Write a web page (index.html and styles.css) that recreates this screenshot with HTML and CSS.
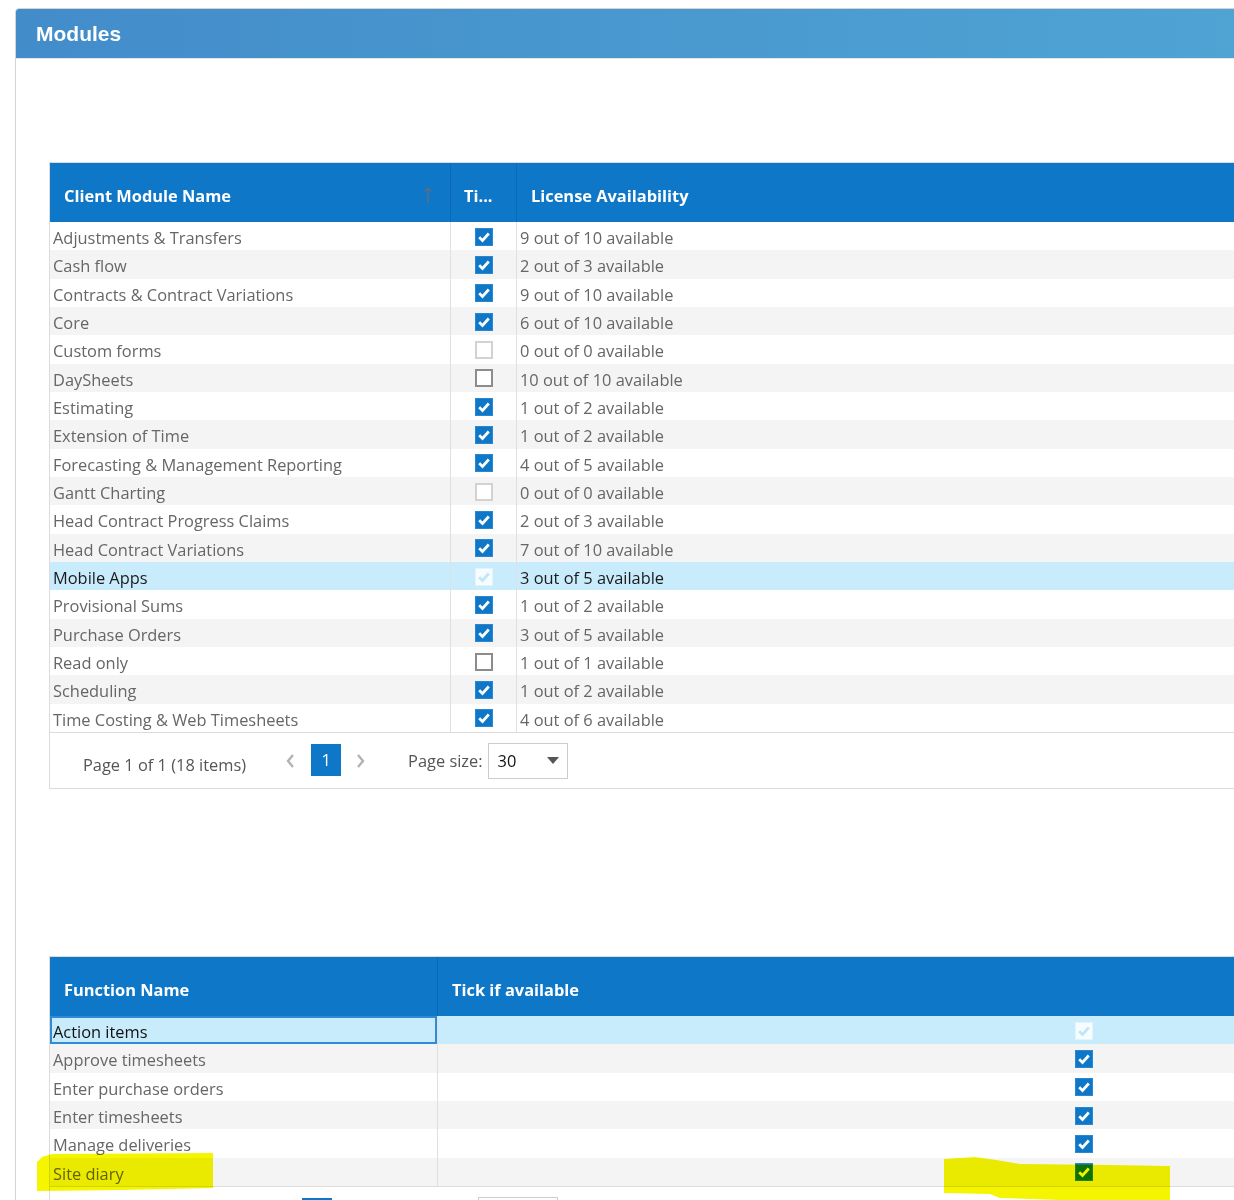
FILE: index.html
```html
<!DOCTYPE html>
<html>
<head>
<meta charset="utf-8">
<title>Modules</title>
<link rel="stylesheet" href="styles.css">
</head>
<body>
<div class="panel">
  <div class="panel-head">Modules</div>
  <div class="panel-body">

    <div class="grid">
      <div class="ghead">
        <div class="hc m-name"><span>Client Module Name</span>
          <svg class="sort" width="10" height="18" viewBox="0 0 10 18"><path d="M5 17V2M1.5 5.5L5 2l3.5 3.5" fill="none" stroke="#5b6f82" stroke-width="1.4"/></svg>
        </div>
        <div class="hc m-tick">Ti...</div>
        <div class="hc m-lic">License Availability</div>
      </div>

      <div class="grow"><div class="gc m-name">Adjustments &amp; Transfers</div><div class="gc m-tick"><span class="cb on"><svg viewBox="0 0 18 18"><path d="M4.2 9.2l3.3 3.3 6.3-7" /></svg></span></div><div class="gc m-lic">9 out of 10 available</div></div>
      <div class="grow alt"><div class="gc m-name">Cash flow</div><div class="gc m-tick"><span class="cb on"><svg viewBox="0 0 18 18"><path d="M4.2 9.2l3.3 3.3 6.3-7" /></svg></span></div><div class="gc m-lic">2 out of 3 available</div></div>
      <div class="grow"><div class="gc m-name">Contracts &amp; Contract Variations</div><div class="gc m-tick"><span class="cb on"><svg viewBox="0 0 18 18"><path d="M4.2 9.2l3.3 3.3 6.3-7" /></svg></span></div><div class="gc m-lic">9 out of 10 available</div></div>
      <div class="grow alt"><div class="gc m-name">Core</div><div class="gc m-tick"><span class="cb on"><svg viewBox="0 0 18 18"><path d="M4.2 9.2l3.3 3.3 6.3-7" /></svg></span></div><div class="gc m-lic">6 out of 10 available</div></div>
      <div class="grow"><div class="gc m-name">Custom forms</div><div class="gc m-tick"><span class="cb off dis"></span></div><div class="gc m-lic">0 out of 0 available</div></div>
      <div class="grow alt"><div class="gc m-name">DaySheets</div><div class="gc m-tick"><span class="cb off"></span></div><div class="gc m-lic">10 out of 10 available</div></div>
      <div class="grow"><div class="gc m-name">Estimating</div><div class="gc m-tick"><span class="cb on"><svg viewBox="0 0 18 18"><path d="M4.2 9.2l3.3 3.3 6.3-7" /></svg></span></div><div class="gc m-lic">1 out of 2 available</div></div>
      <div class="grow alt"><div class="gc m-name">Extension of Time</div><div class="gc m-tick"><span class="cb on"><svg viewBox="0 0 18 18"><path d="M4.2 9.2l3.3 3.3 6.3-7" /></svg></span></div><div class="gc m-lic">1 out of 2 available</div></div>
      <div class="grow"><div class="gc m-name">Forecasting &amp; Management Reporting</div><div class="gc m-tick"><span class="cb on"><svg viewBox="0 0 18 18"><path d="M4.2 9.2l3.3 3.3 6.3-7" /></svg></span></div><div class="gc m-lic">4 out of 5 available</div></div>
      <div class="grow alt"><div class="gc m-name">Gantt Charting</div><div class="gc m-tick"><span class="cb off dis"></span></div><div class="gc m-lic">0 out of 0 available</div></div>
      <div class="grow"><div class="gc m-name">Head Contract Progress Claims</div><div class="gc m-tick"><span class="cb on"><svg viewBox="0 0 18 18"><path d="M4.2 9.2l3.3 3.3 6.3-7" /></svg></span></div><div class="gc m-lic">2 out of 3 available</div></div>
      <div class="grow alt"><div class="gc m-name">Head Contract Variations</div><div class="gc m-tick"><span class="cb on"><svg viewBox="0 0 18 18"><path d="M4.2 9.2l3.3 3.3 6.3-7" /></svg></span></div><div class="gc m-lic">7 out of 10 available</div></div>
      <div class="grow sel"><div class="gc m-name">Mobile Apps</div><div class="gc m-tick"><span class="cb ghost"><svg viewBox="0 0 18 18"><path d="M4.2 9.2l3.3 3.3 6.3-7" /></svg></span></div><div class="gc m-lic">3 out of 5 available</div></div>
      <div class="grow"><div class="gc m-name">Provisional Sums</div><div class="gc m-tick"><span class="cb on"><svg viewBox="0 0 18 18"><path d="M4.2 9.2l3.3 3.3 6.3-7" /></svg></span></div><div class="gc m-lic">1 out of 2 available</div></div>
      <div class="grow alt"><div class="gc m-name">Purchase Orders</div><div class="gc m-tick"><span class="cb on"><svg viewBox="0 0 18 18"><path d="M4.2 9.2l3.3 3.3 6.3-7" /></svg></span></div><div class="gc m-lic">3 out of 5 available</div></div>
      <div class="grow"><div class="gc m-name">Read only</div><div class="gc m-tick"><span class="cb off"></span></div><div class="gc m-lic">1 out of 1 available</div></div>
      <div class="grow alt"><div class="gc m-name">Scheduling</div><div class="gc m-tick"><span class="cb on"><svg viewBox="0 0 18 18"><path d="M4.2 9.2l3.3 3.3 6.3-7" /></svg></span></div><div class="gc m-lic">1 out of 2 available</div></div>
      <div class="grow"><div class="gc m-name">Time Costing &amp; Web Timesheets</div><div class="gc m-tick"><span class="cb on"><svg viewBox="0 0 18 18"><path d="M4.2 9.2l3.3 3.3 6.3-7" /></svg></span></div><div class="gc m-lic">4 out of 6 available</div></div>

      <div class="pager">
        <span class="pinfo">Page 1 of 1 (18 items)</span>
        <span class="parrow prev"><svg width="10" height="16" viewBox="0 0 10 16"><path d="M8 2L3 8l5 6" fill="none" stroke="#b3b3b3" stroke-width="2.4"/></svg></span>
        <span class="pbtn">1</span>
        <span class="parrow next"><svg width="10" height="16" viewBox="0 0 10 16"><path d="M2 2l5 6-5 6" fill="none" stroke="#b3b3b3" stroke-width="2.4"/></svg></span>
        <span class="plabel">Page size:</span>
        <span class="pselect"><span>30</span><svg width="12" height="7" viewBox="0 0 12 7"><path d="M0 0h12L6 7z" fill="#555"/></svg></span>
      </div>
    </div>

    <div class="grid grid-fn">
      <div class="ghead">
        <div class="hc f-name">Function Name</div>
        <div class="hc f-tick">Tick if available</div>
      </div>
      <div class="grow sel"><div class="gc f-name focus">Action items</div><div class="gc f-tick"><span class="cb ghost"><svg viewBox="0 0 18 18"><path d="M4.2 9.2l3.3 3.3 6.3-7" /></svg></span></div></div>
      <div class="grow alt"><div class="gc f-name">Approve timesheets</div><div class="gc f-tick"><span class="cb on"><svg viewBox="0 0 18 18"><path d="M4.2 9.2l3.3 3.3 6.3-7" /></svg></span></div></div>
      <div class="grow"><div class="gc f-name">Enter purchase orders</div><div class="gc f-tick"><span class="cb on"><svg viewBox="0 0 18 18"><path d="M4.2 9.2l3.3 3.3 6.3-7" /></svg></span></div></div>
      <div class="grow alt"><div class="gc f-name">Enter timesheets</div><div class="gc f-tick"><span class="cb on"><svg viewBox="0 0 18 18"><path d="M4.2 9.2l3.3 3.3 6.3-7" /></svg></span></div></div>
      <div class="grow"><div class="gc f-name">Manage deliveries</div><div class="gc f-tick"><span class="cb on"><svg viewBox="0 0 18 18"><path d="M4.2 9.2l3.3 3.3 6.3-7" /></svg></span></div></div>
      <div class="grow alt"><div class="gc f-name">Site diary</div><div class="gc f-tick"><span class="cb on"><svg viewBox="0 0 18 18"><path d="M4.2 9.2l3.3 3.3 6.3-7" /></svg></span></div></div>

      <div class="pager">
        <span class="pinfo">Page 1 of 1 (6 items)</span>
        <span class="parrow prev"><svg width="10" height="16" viewBox="0 0 10 16"><path d="M8 2L3 8l5 6" fill="none" stroke="#b3b3b3" stroke-width="2.4"/></svg></span>
        <span class="pbtn">1</span>
        <span class="parrow next"><svg width="10" height="16" viewBox="0 0 10 16"><path d="M2 2l5 6-5 6" fill="none" stroke="#b3b3b3" stroke-width="2.4"/></svg></span>
        <span class="plabel">Page size:</span>
        <span class="pselect"><span>30</span><svg width="12" height="7" viewBox="0 0 12 7"><path d="M0 0h12L6 7z" fill="#555"/></svg></span>
      </div>
    </div>

  </div>
</div>

<svg class="marker" width="1234" height="1200" viewBox="0 0 1234 1200">
  <path d="M37 1162L42 1157L52 1154L213 1153L213 1188L120 1190L37 1191Z" fill="#f5f500"/>
  <path d="M944 1159L975 1157L996 1160L1020 1164L1110 1165L1170 1166L1170 1200L1060 1200L1000 1198L990 1194L944 1193Z" fill="#f5f500"/>
</svg>
</body>
</html>
```

FILE: styles.css
```css
html, body {
  margin: 0;
  padding: 0;
  background: #ffffff;
  overflow: hidden;
}

body {
  position: relative;
  width: 1234px;
  height: 1200px;
  font-family: "Open Sans", "Noto Sans", sans-serif;
  font-size: 16.4px;
  color: #666666;
}

.panel {
  margin: 8px 0 0 15px;
  width: 1760px;
  height: 1300px;
  border: 1px solid #d4d4d4;
  border-radius: 4px 4px 0 0;
  box-sizing: border-box;
}

.panel-head {
  height: 50px;
  box-sizing: border-box;
  padding-left: 20px;
  display: flex;
  align-items: center;
  background: linear-gradient(to right, #438cca, #4fa4d4 70%);
  color: #ffffff;
  font: bold 21px "Liberation Sans", Arial, sans-serif;
  border-radius: 3px 3px 0 0;
  border-bottom: 1px solid #e6e6e6;
}

.panel-body {
  padding: 103px 0 0 33px;
}

.grid {
  width: 1680px;
  border-left: 1px solid #dcdcdc;
  border-top: 1px solid #dcdcdc;
}

.grid-fn {
  margin-top: 167px;
}

.ghead {
  display: flex;
  height: 59px;
  background: #0f77c8;
}

.hc {
  box-sizing: border-box;
  display: flex;
  align-items: center;
  padding: 6px 14px 0 14px;
  color: #ffffff;
  font-weight: 700;
  font-size: 16.4px;
  white-space: nowrap;
  border-right: 1px solid #0c69b3;
}

.hc.m-name {
  justify-content: space-between;
  padding-right: 17px;
}

.sort {
  margin-top: -2px;
}

.hc.m-tick {
  padding-left: 13px;
  padding-right: 6px;
  overflow: hidden;
}

.m-name { width: 401px; flex: none; }
.m-tick { width: 66px; flex: none; }
.m-lic  { flex: 1; border-right: none; }

.f-name { width: 388px; flex: none; }
.f-tick { flex: 1; border-right: none; }

.grow {
  display: flex;
  height: 28.33px;
  background: #ffffff;
}

.grow.alt {
  background: #f4f4f4;
}

.grow.sel {
  background: #c9ecfc;
  color: #1a1a1a;
}

.gc {
  box-sizing: border-box;
  display: flex;
  align-items: center;
  padding: 4px 3px 0 3px;
  border-right: 1px solid #e0e0e0;
  white-space: nowrap;
  line-height: 22px;
}

.gc.m-tick, .gc.f-tick {
  justify-content: center;
  padding: 1px 0 0 0;
}

.gc.focus {
  box-shadow: inset 0 0 0 2px #2f8bd6;
  color: #111111;
}

.cb {
  width: 18px;
  height: 18px;
  box-sizing: border-box;
  display: inline-flex;
  align-items: center;
  justify-content: center;
}

.cb svg {
  width: 18px;
  height: 18px;
  display: block;
  flex: none;
}

.cb svg path {
  fill: none;
  stroke-width: 2.7;
}

.cb.on {
  background: #0f77c8;
  border: 1px solid #2b88d0;
}

.cb.on svg path {
  stroke: #ffffff;
}

.cb.ghost {
  background: #f7fcff;
  border: 1px solid #e2f4fd;
}

.cb.ghost svg path {
  stroke: #bfe6f9;
}

.cb.off {
  background: #ffffff;
  border: 2px solid #8c8c8c;
}

.cb.off.dis {
  border-color: #d2d2d2;
}

.pager {
  display: flex;
  align-items: flex-start;
  height: 55px;
  border-top: 1px solid #dcdcdc;
  border-bottom: 1px solid #dcdcdc;
  background: #ffffff;
  color: #555555;
}

.pinfo {
  margin: 21px 0 0 33px;
  line-height: 22px;
}

.parrow {
  display: flex;
  align-items: center;
  justify-content: center;
  width: 16px;
  height: 32px;
  margin-top: 12px;
}

.parrow.prev {
  margin-left: 36px;
  margin-right: 13px;
}

.parrow.next {
  margin-left: 12px;
}

.pbtn {
  width: 30px;
  height: 32px;
  margin-top: 11px;
  background: #0f77c8;
  color: #ffffff;
  display: flex;
  align-items: center;
  justify-content: center;
  line-height: 22px;
}

.plabel {
  margin: 17px 0 0 39px;
  line-height: 22px;
}

.pselect {
  margin: 10px 0 0 5px;
  width: 80px;
  height: 36px;
  box-sizing: border-box;
  border: 1px solid #cccccc;
  display: flex;
  align-items: center;
  justify-content: space-between;
  padding: 0 8px 0 9px;
  color: #111111;
  background: #ffffff;
}

.marker {
  position: absolute;
  left: 0;
  top: 0;
  mix-blend-mode: multiply;
  pointer-events: none;
}
```
